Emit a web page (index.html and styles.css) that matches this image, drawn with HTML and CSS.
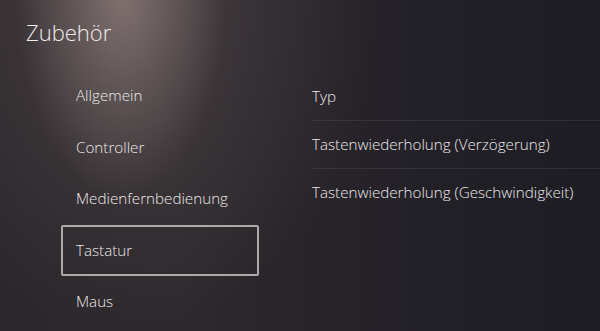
FILE: index.html
```html
<!DOCTYPE html>
<html lang="de">
<head>
    <meta charset="UTF-8">
    <title>Zubehör</title>
    <link rel="stylesheet" href="styles.css">
</head>
<body>
    <div class="screen">
        <div class="title">Zubehör</div>
        <div class="content">
            <div class="menu">
                <div class="menu-item">Allgemein</div>
                <div class="menu-item">Controller</div>
                <div class="menu-item">Medienfernbedienung</div>
                <div class="menu-item selected">Tastatur</div>
                <div class="menu-item">Maus</div>
            </div>
            <div class="options">
                <div class="option">Typ</div>
                <div class="option">Tastenwiederholung (Verzögerung)</div>
                <div class="option">Tastenwiederholung (Geschwindigkeit)</div>
            </div>
        </div>
    </div>
</body>
</html>
```

FILE: styles.css
```css
body {
    margin: 0;
    font-family: "Open Sans", "Noto Sans", sans-serif;
    color: #ebe8e8;
    background-color: #24222a;
}
.screen {
    width: 600px;
    height: 331px;
    overflow: hidden;
    background:
        radial-gradient(ellipse 105px 210px at 122px -10px, rgba(175, 155, 150, 0.55), rgba(175, 155, 150, 0) 100%),
        radial-gradient(ellipse 250px 330px at 130px 0px, rgba(120, 105, 105, 0.35), rgba(120, 105, 105, 0) 100%),
        linear-gradient(90deg, #2b272b 0%, #2d292d 30%, #242128 65%, #1e1d24 100%);
}
.title {
    padding: 16px 0 0 26px;
    font-size: 22px;
    font-weight: 300;
    line-height: 32px;
    color: #f0ecec;
}
.content {
    display: flex;
    padding-top: 22px;
}
.menu {
    width: 198px;
    margin-left: 61px;
}
.menu-item {
    height: 51.5px;
    line-height: 51.5px;
    padding-left: 15px;
    font-size: 15.2px;
    font-weight: 300;
    box-sizing: border-box;
}
.menu-item.selected {
    border: 2px solid #b0a8a7;
    border-radius: 2px;
    padding-left: 13px;
    line-height: 47.5px;
}
.options {
    flex: 1;
    margin-left: 53px;
    margin-top: 3px;
}
.option {
    height: 48px;
    line-height: 47px;
    font-size: 15.2px;
    font-weight: 300;
    border-bottom: 1px solid rgba(255, 255, 255, 0.08);
    box-sizing: border-box;
}
.option:last-child {
    border-bottom: none;
}
```
